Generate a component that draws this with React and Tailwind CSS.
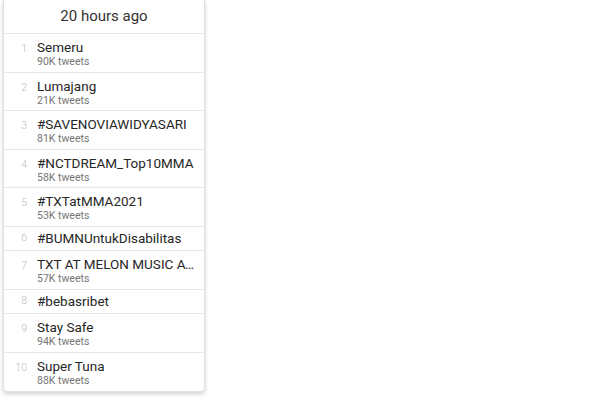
import React from "react";

const trends = [
  { n: 1, name: "Semeru", tweets: "90K tweets" },
  { n: 2, name: "Lumajang", tweets: "21K tweets" },
  { n: 3, name: "#SAVENOVIAWIDYASARI", tweets: "81K tweets" },
  { n: 4, name: "#NCTDREAM_Top10MMA", tweets: "58K tweets" },
  { n: 5, name: "#TXTatMMA2021", tweets: "53K tweets" },
  { n: 6, name: "#BUMNUntukDisabilitas" },
  { n: 7, name: "TXT AT MELON MUSIC AWARDS", tweets: "57K tweets" },
  { n: 8, name: "#bebasribet" },
  { n: 9, name: "Stay Safe", tweets: "94K tweets" },
  { n: 10, name: "Super Tuna", tweets: "88K tweets" },
];

export default function App() {
  return (
    <div className="w-[600px] h-[399px] bg-white font-['Roboto',sans-serif]">
      <div className="ml-[3px] w-[202px] bg-white border-x border-b border-[#e2e2e2] rounded-b-[4px] shadow-[0_2px_4px_rgba(0,0,0,0.18)]">
        <div className="h-[34px] border-b border-[#e6e6e6] flex items-center justify-center text-[15px] text-[#333]">
          20 hours ago
        </div>
        {trends.map((t, i) => (
          <div
            key={t.n}
            className={`flex ${t.tweets ? "items-start h-[38.5px] pt-[5px]" : "items-center h-[24.5px]"} ${i < trends.length - 1 ? "border-b border-[#e6e6e6]" : ""}`}
          >
            <div className={`w-[23px] text-right text-[10.5px] text-[#bdbdbd] font-light shrink-0 ${t.tweets ? "mt-[2px]" : ""}`}>
              {t.n}
            </div>
            <div className="ml-[10px] min-w-0 flex-1 pr-[6px]">
              <div className="text-[13.5px] leading-[16px] text-[#262626] truncate">{t.name}</div>
              {t.tweets && (
                <div className="text-[10.5px] leading-[12px] text-[#757575] mt-[1px]">{t.tweets}</div>
              )}
            </div>
          </div>
        ))}
      </div>
    </div>
  );
}
